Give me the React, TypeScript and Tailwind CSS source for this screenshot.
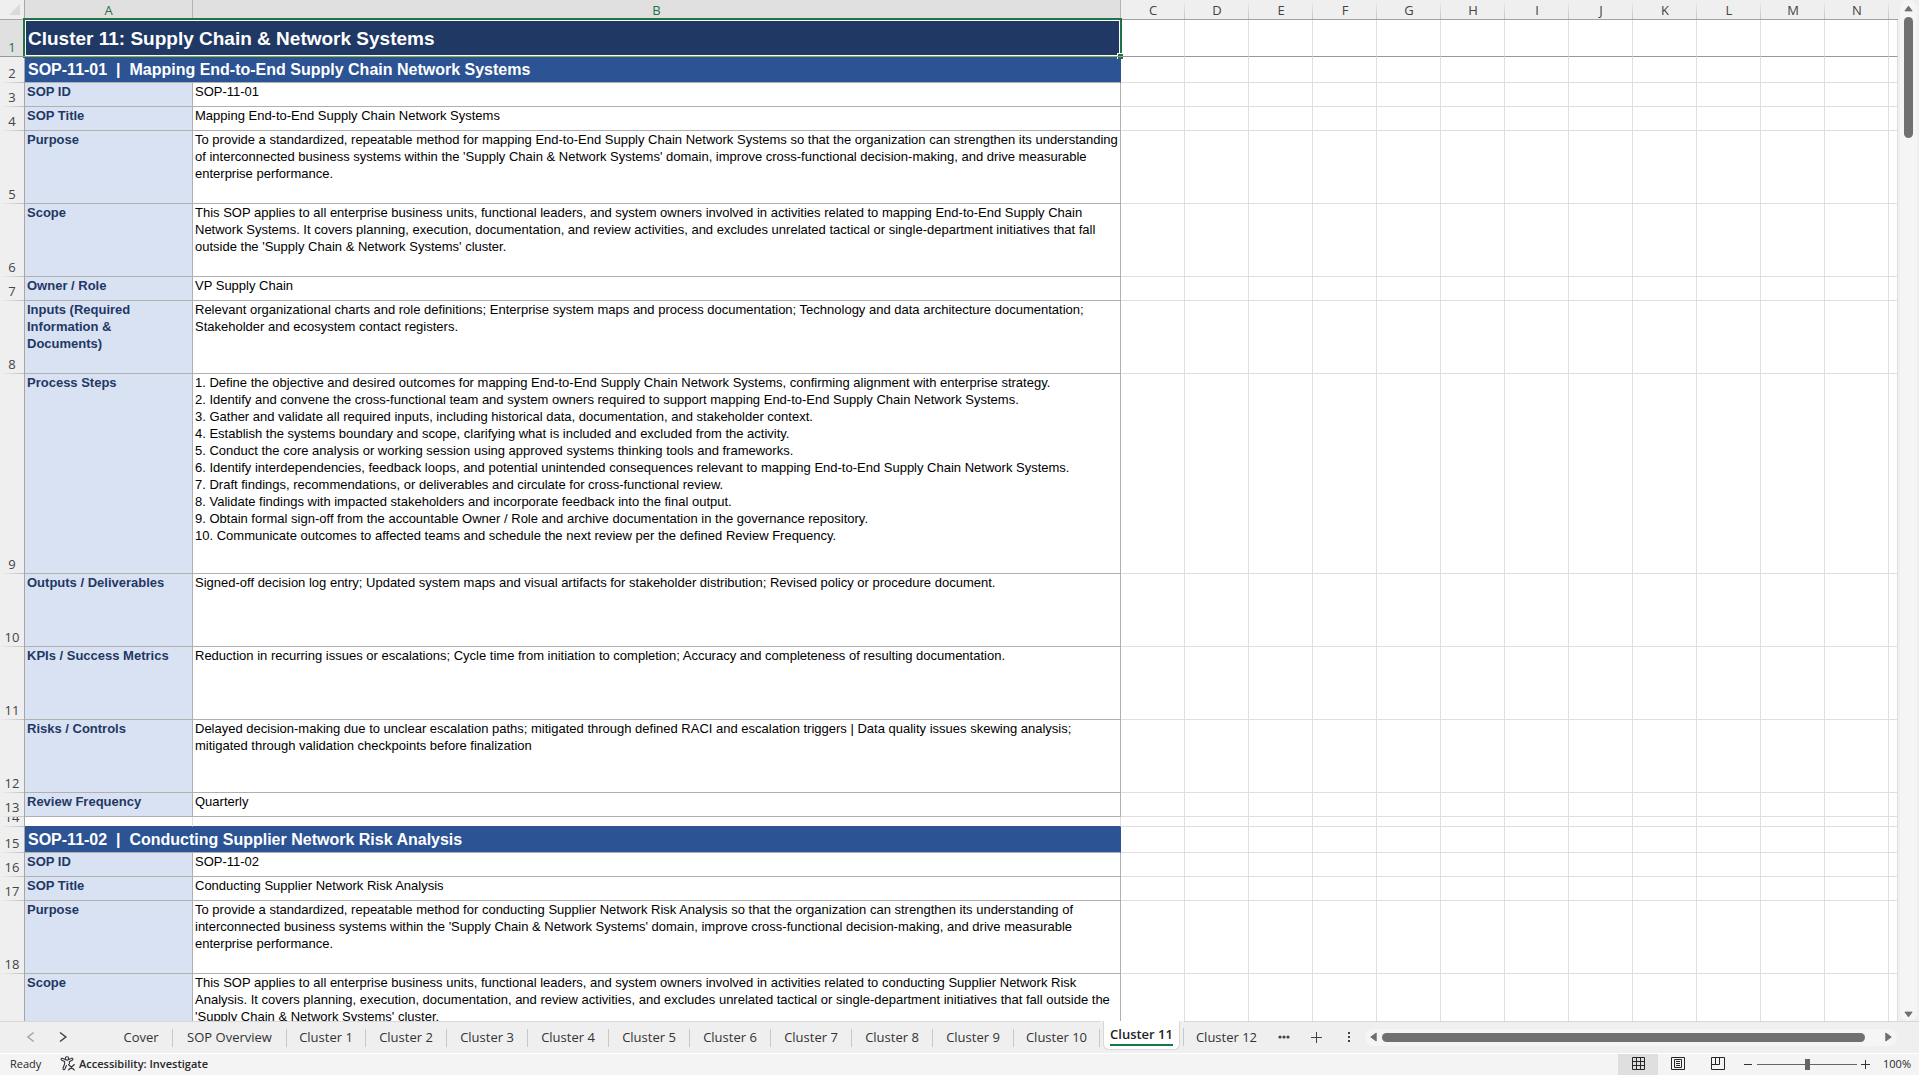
import type { ReactNode } from 'react';

const SANS = "font-['Open_Sans','Noto_Sans',sans-serif]";
const LETTERS = ['C', 'D', 'E', 'F', 'G', 'H', 'I', 'J', 'K', 'L', 'M', 'N'];

type Row = {
  n: number;
  h: string;
  kind: 'title' | 'section' | 'field' | 'gap';
  label?: string;
  text?: string;
};

const ROWS: Row[] = [
  { n: 1, h: 'h-[37px]', kind: 'title', label: 'Cluster 11: Supply Chain & Network Systems' },
  { n: 2, h: 'h-[26px]', kind: 'section', label: 'SOP-11-01  |  Mapping End-to-End Supply Chain Network Systems' },
  { n: 3, h: 'h-6', kind: 'field', label: 'SOP ID', text: 'SOP-11-01' },
  { n: 4, h: 'h-6', kind: 'field', label: 'SOP Title', text: 'Mapping End-to-End Supply Chain Network Systems' },
  {
    n: 5, h: 'h-[73px]', kind: 'field', label: 'Purpose',
    text: `To provide a standardized, repeatable method for mapping End-to-End Supply Chain Network Systems so that the organization can strengthen its understanding
of interconnected business systems within the 'Supply Chain & Network Systems' domain, improve cross-functional decision-making, and drive measurable
enterprise performance.`,
  },
  {
    n: 6, h: 'h-[73px]', kind: 'field', label: 'Scope',
    text: `This SOP applies to all enterprise business units, functional leaders, and system owners involved in activities related to mapping End-to-End Supply Chain
Network Systems. It covers planning, execution, documentation, and review activities, and excludes unrelated tactical or single-department initiatives that fall
outside the 'Supply Chain & Network Systems' cluster.`,
  },
  { n: 7, h: 'h-6', kind: 'field', label: 'Owner / Role', text: 'VP Supply Chain' },
  {
    n: 8, h: 'h-[73px]', kind: 'field', label: 'Inputs (Required\nInformation &\nDocuments)',
    text: `Relevant organizational charts and role definitions; Enterprise system maps and process documentation; Technology and data architecture documentation;
Stakeholder and ecosystem contact registers.`,
  },
  {
    n: 9, h: 'h-[200px]', kind: 'field', label: 'Process Steps',
    text: `1. Define the objective and desired outcomes for mapping End-to-End Supply Chain Network Systems, confirming alignment with enterprise strategy.
2. Identify and convene the cross-functional team and system owners required to support mapping End-to-End Supply Chain Network Systems.
3. Gather and validate all required inputs, including historical data, documentation, and stakeholder context.
4. Establish the systems boundary and scope, clarifying what is included and excluded from the activity.
5. Conduct the core analysis or working session using approved systems thinking tools and frameworks.
6. Identify interdependencies, feedback loops, and potential unintended consequences relevant to mapping End-to-End Supply Chain Network Systems.
7. Draft findings, recommendations, or deliverables and circulate for cross-functional review.
8. Validate findings with impacted stakeholders and incorporate feedback into the final output.
9. Obtain formal sign-off from the accountable Owner / Role and archive documentation in the governance repository.
10. Communicate outcomes to affected teams and schedule the next review per the defined Review Frequency.`,
  },
  {
    n: 10, h: 'h-[73px]', kind: 'field', label: 'Outputs / Deliverables',
    text: 'Signed-off decision log entry; Updated system maps and visual artifacts for stakeholder distribution; Revised policy or procedure document.',
  },
  {
    n: 11, h: 'h-[73px]', kind: 'field', label: 'KPIs / Success Metrics',
    text: 'Reduction in recurring issues or escalations; Cycle time from initiation to completion; Accuracy and completeness of resulting documentation.',
  },
  {
    n: 12, h: 'h-[73px]', kind: 'field', label: 'Risks / Controls',
    text: `Delayed decision-making due to unclear escalation paths; mitigated through defined RACI and escalation triggers | Data quality issues skewing analysis;
mitigated through validation checkpoints before finalization`,
  },
  { n: 13, h: 'h-6', kind: 'field', label: 'Review Frequency', text: 'Quarterly' },
  { n: 14, h: 'h-[10px]', kind: 'gap' },
  { n: 15, h: 'h-[26px]', kind: 'section', label: 'SOP-11-02  |  Conducting Supplier Network Risk Analysis' },
  { n: 16, h: 'h-6', kind: 'field', label: 'SOP ID', text: 'SOP-11-02' },
  { n: 17, h: 'h-6', kind: 'field', label: 'SOP Title', text: 'Conducting Supplier Network Risk Analysis' },
  {
    n: 18, h: 'h-[73px]', kind: 'field', label: 'Purpose',
    text: `To provide a standardized, repeatable method for conducting Supplier Network Risk Analysis so that the organization can strengthen its understanding of
interconnected business systems within the 'Supply Chain & Network Systems' domain, improve cross-functional decision-making, and drive measurable
enterprise performance.`,
  },
  {
    n: 19, h: 'h-[73px]', kind: 'field', label: 'Scope',
    text: `This SOP applies to all enterprise business units, functional leaders, and system owners involved in activities related to conducting Supplier Network Risk
Analysis. It covers planning, execution, documentation, and review activities, and excludes unrelated tactical or single-department initiatives that fall outside the
'Supply Chain & Network Systems' cluster.`,
  },
];

const TABS = [
  { name: 'Cover', w: 'w-[62px]' },
  { name: 'SOP Overview', w: 'w-[113px]' },
  { name: 'Cluster 1', w: 'w-[78px]' },
  { name: 'Cluster 2', w: 'w-20' },
  { name: 'Cluster 3', w: 'w-20' },
  { name: 'Cluster 4', w: 'w-20' },
  { name: 'Cluster 5', w: 'w-20' },
  { name: 'Cluster 6', w: 'w-20' },
  { name: 'Cluster 7', w: 'w-20' },
  { name: 'Cluster 8', w: 'w-20' },
  { name: 'Cluster 9', w: 'w-20' },
  { name: 'Cluster 10', w: 'w-[85px]' },
  { name: 'Cluster 11', w: 'w-[83px]', active: true },
  { name: 'Cluster 12', w: 'w-[85px]' },
];

function ColumnHeader({ children, selected }: { children?: ReactNode; selected?: boolean }) {
  return (
    <th
      scope="col"
      className={
        selected
          ? 'h-5 border-r border-b border-r-[#b4b4b4] border-b-[#217346] bg-[#e0e0e0] font-normal text-[#217346]'
          : 'h-5 border-b border-[#a0a0a0] bg-[#efefef] bg-[linear-gradient(to_bottom,#efefef,#c4c4c4)] bg-[length:1px_100%] bg-right bg-no-repeat font-normal text-[#444444]'
      }
    >
      <div className="flex h-[19px] items-center justify-center pt-px text-[13px] leading-[18px]">{children}</div>
    </th>
  );
}

function RowHeader({ n, h }: { n: number; h: string }) {
  const base = 'border-r p-0 text-center align-bottom font-normal ' + h + ' ';
  if (n === 1) {
    return (
      <th scope="row" className={base + 'border-b border-b-[#999999] border-r-[#217346] bg-[#e0e0e0] text-[13px] leading-[18px] text-[#217346]'}>
        1
      </th>
    );
  }
  return (
    <th
      scope="row"
      className={base + 'border-[#a6a6a6] bg-[#efefef] bg-[linear-gradient(to_right,#efefef,#c0c0c0)] bg-[length:100%_1px] bg-bottom bg-no-repeat text-[13px] leading-[18px] text-[#444444]'}
    >
      {n === 14 ? <div className="flex h-[10px] flex-col justify-end overflow-hidden pb-px">14</div> : <div className="pb-px">{n}</div>}
    </th>
  );
}

function SelectionFrame() {
  return (
    <>
      <div className="absolute -inset-[2px] z-10 border-2 border-[#217346]" />
      <div className="absolute inset-0 z-10 border border-white" />
      <div className="absolute -right-[3px] -bottom-[3px] z-10 size-[6px] border-t border-l border-white bg-[#217346]" />
      <div className="absolute -right-[3px] -bottom-px -left-[2px] z-10 h-px bg-[#999999]" />
    </>
  );
}

function DataCells({ row }: { row: Row }) {
  if (row.kind === 'title') {
    return (
      <td colSpan={2} className="relative border-r border-b border-[#1f3864] bg-[#1f3864] pt-px pl-[3px] text-left align-middle text-[19px] leading-7 font-bold text-white">
        {row.label}
        <SelectionFrame />
      </td>
    );
  }
  if (row.kind === 'section') {
    return (
      <td colSpan={2} className="border-r border-b border-r-[#2c5394] border-b-[#b0b0b0] bg-[#2c5394] pl-[3px] align-middle text-base leading-6 font-bold whitespace-pre text-white">
        {row.label}
      </td>
    );
  }
  if (row.kind === 'gap') {
    return (
      <>
        <td className="border-r border-b border-r-[#dfdfdf] border-b-[#2c5394]" />
        <td className="border-r border-b border-r-[#dfdfdf] border-b-[#2c5394]" />
      </>
    );
  }
  return (
    <>
      <td className="border-r border-b border-[#b0b0b0] bg-[#d9e2f3] pl-[2px] align-top text-[13px] leading-[17px] font-bold whitespace-pre text-[#1f3864]">
        {row.label}
      </td>
      <td className="border-r border-b border-[#b0b0b0] pl-[2px] align-top text-[13px] leading-[17px] whitespace-pre text-black">
        {row.text}
      </td>
    </>
  );
}

function Sheet() {
  return (
    <div className="min-w-0 flex-1 overflow-hidden">
      <table className="w-full table-fixed border-separate border-spacing-0 bg-white font-['Liberation_Sans',Arial,sans-serif]">
        <colgroup>
          <col className="w-[25px]" />
          <col className="w-[168px]" />
          <col className="w-[928px]" />
          {LETTERS.map((l) => <col key={l} className="w-16" />)}
          <col />
        </colgroup>
        <thead className={SANS}>
          <tr>
            <th className="border-r border-b border-[#a6a6a6] bg-[#efefef] p-0">
              <button aria-label="Select all" className="flex h-[19px] w-full items-center justify-end pr-1">
                <svg width="11" height="11" viewBox="0 0 11 11"><path d="M11 0V11H0Z" fill="#dadada" /></svg>
              </button>
            </th>
            <ColumnHeader selected>A</ColumnHeader>
            <ColumnHeader selected>B</ColumnHeader>
            {LETTERS.map((l) => <ColumnHeader key={l}>{l}</ColumnHeader>)}
            <th className="border-b border-[#a0a0a0] bg-[#efefef]" />
          </tr>
        </thead>
        <tbody>
          {ROWS.map((row) => {
            const line = row.n === 1 ? 'border-r border-b border-r-[#dfdfdf] border-b-[#999999]' : 'border-r border-b border-[#dfdfdf]';
            return (
              <tr key={row.n} className="[&>th]:font-['Open_Sans','Noto_Sans',sans-serif]">
                <RowHeader n={row.n} h={row.h} />
                <DataCells row={row} />
                {LETTERS.map((l) => <td key={l} className={line} />)}
                <td className={line} />
              </tr>
            );
          })}
        </tbody>
      </table>
    </div>
  );
}

function VerticalScroll() {
  return (
    <div className="w-[21px] shrink-0 bg-[#efefef] pr-[2px] pl-[2px]">
      <div className="flex h-full flex-col items-center rounded-full bg-[#f5f5f5] pt-[5px] pb-[3px]">
        <button aria-label="Scroll up">
          <svg className="block" width="9" height="7" viewBox="0 0 10 7"><path d="M5 0.8 9 6.2H1Z" fill="#707070" stroke="#707070" strokeLinejoin="round" /></svg>
        </button>
        <div className="mt-[5px] h-[121px] w-[9px] rounded-full bg-[#707070]" />
        <div className="flex-1" />
        <button aria-label="Scroll down">
          <svg className="block" width="9" height="7" viewBox="0 0 10 7"><path d="M5 6.2 9 0.8H1Z" fill="#707070" stroke="#707070" strokeLinejoin="round" /></svg>
        </button>
      </div>
    </div>
  );
}

function TabBar() {
  return (
    <div className="flex h-8 shrink-0 items-start bg-[#efefef]">
      <div className="flex h-8 w-[110px] shrink-0 items-center gap-5 border-t border-[#d8d8d8] pb-px pl-[25px]">
        <button aria-label="Previous sheets">
          <svg className="block" width="12" height="12" viewBox="0 0 12 12" fill="none" stroke="#a0a0a0" strokeWidth="1.3"><path d="M8.7 1.5 2.8 6l5.9 4.5" /></svg>
        </button>
        <button aria-label="Next sheets">
          <svg className="block" width="12" height="12" viewBox="0 0 12 12" fill="none" stroke="#444444" strokeWidth="1.5"><path d="M3 1.5 8.8 6 3 10.5" /></svg>
        </button>
      </div>
      <div className="flex shrink-0" role="tablist">
        {TABS.map((t, i) => (
          <div key={t.name} className={t.active ? 'flex h-8 items-center' : 'flex h-8 items-center border-t border-[#d8d8d8]'}>
            {t.active ? (
              <div className={t.w + ' flex h-8 flex-col px-[3px]'}>
                <button role="tab" aria-selected className="flex h-[29px] items-center justify-center rounded-b-md border-x border-b border-[#d8d8d8] bg-white pb-[2px] text-[13px] font-semibold text-[#242424]">
                  <span className="border-b-2 border-[#107c41] pt-px leading-[20px] whitespace-nowrap">Cluster 11</span>
                </button>
              </div>
            ) : (
              <button role="tab" aria-selected={false} className={t.w + ' pb-[2px] text-center text-[13px] leading-5 whitespace-nowrap text-[#333333]'}>{t.name}</button>
            )}
            {i < TABS.length - 1 && <span className="h-[18px] w-px bg-[#c8c8c8]" />}
          </div>
        ))}
      </div>
      <div className="flex h-8 min-w-0 flex-1 items-center border-t border-[#d8d8d8] pb-px">
        <button aria-label="More sheets" className="flex w-[30px] shrink-0 justify-center">
          <svg width="12" height="4" viewBox="0 0 12 4" fill="#444444"><circle cx="2" cy="2" r="1.6" /><circle cx="6" cy="2" r="1.6" /><circle cx="10" cy="2" r="1.6" /></svg>
        </button>
        <button aria-label="New sheet" className="flex w-[34px] shrink-0 justify-center">
          <svg width="11" height="11" viewBox="0 0 11 11" stroke="#444444"><path d="M5.5 0V11M0 5.5H11" /></svg>
        </button>
        <button aria-label="Resize tab area" className="flex w-8 shrink-0 justify-center">
          <svg width="2" height="10" viewBox="0 0 2 10" fill="#444444"><path d="M0 0H2V2H0ZM0 4H2V6H0ZM0 8H2V10H0Z" /></svg>
        </button>
        <div className="mr-[22px] flex h-[17px] min-w-0 flex-1 items-center rounded-full bg-[#f5f5f5] px-[5px]">
          <button aria-label="Scroll left">
            <svg className="block" width="7" height="10" viewBox="0 0 7 10"><path d="M0.8 5 6.2 1V9Z" fill="#707070" stroke="#707070" strokeLinejoin="round" /></svg>
          </button>
          <div className="mr-5 ml-[5px] h-[9px] flex-1 rounded-full bg-[#707070]" />
          <button aria-label="Scroll right">
            <svg className="block" width="7" height="10" viewBox="0 0 7 10"><path d="M6.2 5 0.8 1V9Z" fill="#707070" stroke="#707070" strokeLinejoin="round" /></svg>
          </button>
        </div>
      </div>
    </div>
  );
}

function StatusBar() {
  return (
    <footer className="flex h-[22px] shrink-0 items-stretch border-t border-white bg-[#f4f4f4] text-[11px] leading-[20px] text-[#262626]">
      <span className="w-[60px] pl-[10px]">Ready</span>
      <button className="flex items-center gap-[3px] pb-[2px] font-semibold">
        <svg width="16" height="15" viewBox="0 0 16 15" fill="none" stroke="#333333" strokeWidth="1.1" strokeLinecap="round" strokeLinejoin="round">
          <circle cx="7" cy="2.4" r="1.7" />
          <path d="M5.3 3.4 2.3 2.3C1 2 .6 3.6 1.7 4.2L4.6 5.5V8L3 12.3C2.7 13.7 4.3 14.2 4.9 13L6.5 9.5" />
          <path d="M8.7 3.4 11.7 2.3C13 2 13.4 3.6 12.3 4.2L9.4 5.5V7.5" />
          <path d="M8.5 8.5 14.3 14M14.3 8.5 8.5 14" />
        </svg>
        Accessibility: Investigate
      </button>
      <div className="flex-1" />
      <button aria-label="Normal view" className="flex w-10 items-center justify-center bg-[#dfdfdf] pb-[2px]">
        <svg width="13" height="13" viewBox="0 0 13 13" fill="none" stroke="#262626"><path d="M.5 .5H12.5V12.5H.5ZM4.5 0V13M8.5 0V13M0 4.5H13M0 8.5H13" /></svg>
      </button>
      <button aria-label="Page layout view" className="flex w-10 items-center justify-center pb-[2px]">
        <svg width="14" height="13" viewBox="0 0 14 13" fill="none" stroke="#262626"><path d="M.5 .5H13.5V12.5H.5ZM3.5 2.5H10.5V10.5H3.5ZM5 4.5H9M5 6.5H9M5 8.5H9" /></svg>
      </button>
      <button aria-label="Page break preview" className="flex w-10 items-center justify-center pb-[2px]">
        <svg width="14" height="13" viewBox="0 0 14 13" fill="none" stroke="#262626"><path d="M.5 .5H13.5V12.5H.5ZM.5 7.5H8.5V.5M4.5 .5V7.5" /></svg>
      </button>
      <button aria-label="Zoom out" className="flex w-[19px] items-center justify-end pr-[5px] pb-px">
        <svg width="8" height="9" viewBox="0 0 8 9" stroke="#333333"><path d="M0 4.5H8" /></svg>
      </button>
      <input
        type="range"
        aria-label="Zoom"
        min={0}
        max={100}
        defaultValue={50}
        className="w-[100px] appearance-none bg-[linear-gradient(#666666,#666666)] bg-[length:100%_1px] bg-center bg-no-repeat [&::-webkit-slider-thumb]:h-[11px] [&::-webkit-slider-thumb]:w-[5px] [&::-webkit-slider-thumb]:appearance-none [&::-webkit-slider-thumb]:bg-[#666666]"
      />
      <button aria-label="Zoom in" className="flex w-[18px] items-center justify-end pr-[5px] pb-px">
        <svg className="shrink-0" width="9" height="9" viewBox="0 0 9 9" stroke="#333333"><path d="M0 4.5H9M4.500 0V9" /></svg>
      </button>
      <button className="w-11 pr-2 pb-px text-right">100%</button>
    </footer>
  );
}

export default function App() {
  return (
    <div className="flex h-screen flex-col overflow-hidden bg-[#efefef] font-['Open_Sans','Noto_Sans',sans-serif]">
      <main className="flex min-h-0 flex-1">
        <Sheet />
        <VerticalScroll />
      </main>
      <TabBar />
      <StatusBar />
    </div>
  );
}
